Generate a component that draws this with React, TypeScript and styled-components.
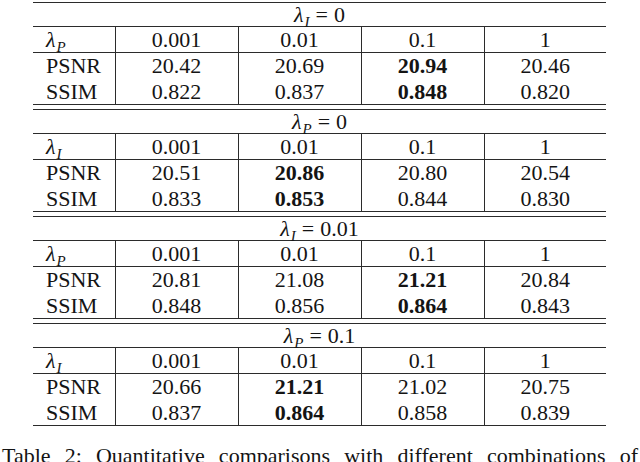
import React from 'react';
import styled, { createGlobalStyle } from 'styled-components';

const rule = '1px solid #2b2b2b';

    // Global
const GlobalStyle = createGlobalStyle`
    body {
        margin: 0;
        background: #ffffff;
    }
`

    // Data
interface SectionData {
    param: 'I' | 'P',
    value: string,
    rowParam: 'I' | 'P',
    best: number,
    psnr: string[],
    ssim: string[]
}

const weights = ['0.001', '0.01', '0.1', '1'];

const sections: SectionData[] = [
    { param: 'I', value: '0', rowParam: 'P', best: 2, psnr: ['20.42', '20.69', '20.94', '20.46'], ssim: ['0.822', '0.837', '0.848', '0.820'] },
    { param: 'P', value: '0', rowParam: 'I', best: 1, psnr: ['20.51', '20.86', '20.80', '20.54'], ssim: ['0.833', '0.853', '0.844', '0.830'] },
    { param: 'I', value: '0.01', rowParam: 'P', best: 2, psnr: ['20.81', '21.08', '21.21', '20.84'], ssim: ['0.848', '0.856', '0.864', '0.843'] },
    { param: 'P', value: '0.1', rowParam: 'I', best: 1, psnr: ['20.66', '21.21', '21.02', '20.75'], ssim: ['0.837', '0.864', '0.858', '0.839'] },
];

    // Components
const StyledPage = styled.div`
    display: flex;
    flex-direction: column;
    width: 640px;
    height: 462px;
    overflow: hidden;
    font-family: 'Liberation Serif', serif;
    color: #141414;
`

const StyledSheet = styled.div`
    display: flex;
    flex-direction: column;
    gap: 4px;
    margin: 2px 0 0 33px;
    width: 573px;
`

const StyledSection = styled.table`
    border-collapse: collapse;
    table-layout: fixed;
    width: 573px;
    border-top: ${rule};
    border-bottom: ${rule};
    font-family: 'Liberation Serif', serif;
    font-size: 22px;
    color: #141414;
`

const StyledHeadCell = styled.td`
    height: 23px;
    padding: 0;
    text-align: center;
    line-height: 23px;
    border-bottom: ${rule};
`

interface RowProps {
    $height: number,
    $ruled?: boolean
}

const StyledRow = styled.tr<RowProps>`
    height: ${({$height}) => $height}px;

    td {
        padding: 0;
        height: ${({$height}) => $height}px;
        line-height: ${({$height}) => $height}px;
        border-bottom: ${({$ruled}) => $ruled ? rule : 'none'};
    }
`

const StyledLabelCell = styled.td`
    text-align: left;
    padding-left: 13px !important;
`

interface ValueCellProps {
    $bold?: boolean
}

const StyledValueCell = styled.td<ValueCellProps>`
    text-align: center;
    border-left: ${rule};
    font-weight: ${({$bold}) => $bold ? 700 : 400};
`

const StyledLambda = styled.span`
    font-style: italic;
`

const StyledSub = styled.sub`
    font-style: italic;
    font-size: 15px;
    vertical-align: -5px;
    line-height: 0;
    margin-left: 1px;
`

const StyledEquals = styled.span`
    margin: 0 6px;
`

const StyledCaption = styled.p`
    margin: 17px 0 0 2px;
    width: 636px;
    font-size: 22px;
    line-height: 26px;
    text-align: justify;
    text-align-last: justify;
`

const Lambda = ({name}: {name: 'I' | 'P'}) => (
    <StyledLambda>λ<StyledSub>{name}</StyledSub></StyledLambda>
)

const Section = ({data}: {data: SectionData}) => (
    <StyledSection>
        <colgroup>
            <col style={{width: 82}} />
            <col style={{width: 123}} />
            <col style={{width: 123}} />
            <col style={{width: 123}} />
            <col style={{width: 122}} />
        </colgroup>
        <tbody>
            <tr>
                <StyledHeadCell colSpan={5}>
                    <Lambda name={data.param} /><StyledEquals>=</StyledEquals>{data.value}
                </StyledHeadCell>
            </tr>
            <StyledRow $height={25} $ruled>
                <StyledLabelCell><Lambda name={data.rowParam} /></StyledLabelCell>
                {weights.map(w => <StyledValueCell key={w}>{w}</StyledValueCell>)}
            </StyledRow>
            <StyledRow $height={26}>
                <StyledLabelCell>PSNR</StyledLabelCell>
                {data.psnr.map((v, i) => <StyledValueCell key={i} $bold={i === data.best}>{v}</StyledValueCell>)}
            </StyledRow>
            <StyledRow $height={25}>
                <StyledLabelCell>SSIM</StyledLabelCell>
                {data.ssim.map((v, i) => <StyledValueCell key={i} $bold={i === data.best}>{v}</StyledValueCell>)}
            </StyledRow>
        </tbody>
    </StyledSection>
)

export default function App() {
    return (
        <StyledPage>
            <GlobalStyle />
            <StyledSheet>
                {sections.map((s, i) => <Section key={i} data={s} />)}
            </StyledSheet>
            <StyledCaption>Table 2: Quantitative comparisons with different combinations of</StyledCaption>
        </StyledPage>
    );
}
